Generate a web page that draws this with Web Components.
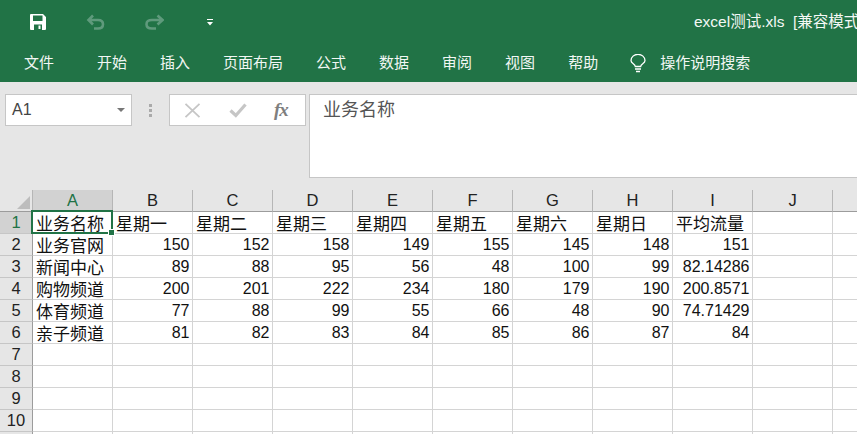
<!DOCTYPE html>
<html lang="zh">
<head>
<meta charset="utf-8">
<title>excel测试.xls</title>
<style>
html,body{margin:0;padding:0;width:857px;height:434px;overflow:hidden;background:#fff;font-family:"Liberation Sans","Noto Sans CJK SC",sans-serif}
x-app{display:flex;flex-direction:column;width:857px;height:434px;overflow:hidden}
</style>
</head>
<body>
<x-app>
<x-titlebar title-text="excel测试.xls  [兼容模式]"></x-titlebar>
<x-tabs></x-tabs>
<x-formula-bar name="A1" value="业务名称"></x-formula-bar>
<x-sheet></x-sheet>
</x-app>
<script>
const CJK='"Liberation Sans","Noto Sans CJK SC",sans-serif';
class XTitlebar extends HTMLElement{
  connectedCallback(){
    const s=this.attachShadow({mode:'open'});
    s.innerHTML=`<style>
    :host{display:flex;align-items:center;height:44px;flex:none;background:#217346;color:#fff;overflow:hidden;font-family:${CJK};box-sizing:border-box;padding-left:30px}
    svg{display:block;flex:none}
    .undo{margin-left:40px}.redo{margin-left:40px}.more{margin-left:43px}
    .title{margin-left:481px;font-size:15.5px;white-space:pre;flex:none;color:#f4f8f5;padding-bottom:4px}
    </style>
    <svg width="16" height="16" viewBox="0 0 16 16"><path fill="#fff" fill-rule="evenodd" d="M1 0H13L16 3V15Q16 16 15 16H1Q0 16 0 15V1Q0 0 1 0ZM3 1.5V7H12.5V1.5ZM4 10.5V16H12V10.5ZM8.5 11.5H10.5V15H8.5Z"/></svg>
    <svg class="undo" width="19" height="16" viewBox="0 0 19 16"><path fill="none" stroke="#5f9a7c" stroke-width="2.6" d="M7 1.5 2.5 6 7 10.5M3 6H12Q17 6 17 10.2T12 14.5H8"/></svg>
    <svg class="redo" width="19" height="16" viewBox="0 0 19 16"><path fill="none" stroke="#5f9a7c" stroke-width="2.6" d="M12.5 1.5 17.5 6 12.5 10.5M17 6H7Q1.5 6 1.5 10.2T7 14.5H11"/></svg>
    <svg class="more" width="6" height="7" viewBox="0 0 6 7"><path fill="#fff" d="M0 0H6V1H0ZM0 3H6L3 6.5Z"/></svg>
    <div class="title">${this.getAttribute('title-text')}</div>`;
  }
}
class XTabs extends HTMLElement{
  connectedCallback(){
    const s=this.attachShadow({mode:'open'});
    const tabs=['文件','开始','插入','页面布局','公式','数据','审阅','视图','帮助'];
    s.innerHTML=`<style>
    :host{display:flex;align-items:center;height:38px;flex:none;background:#217346;color:#f2f7f4;font-size:15px;padding:0 0 4px 24px;box-sizing:border-box;font-family:${CJK};gap:33px;white-space:nowrap;overflow:hidden}
    .file{margin-right:10px}
    .tell{display:flex;align-items:center;gap:14px;font-size:15px;margin-left:-1px}
    svg{display:block;margin:2.5px 0 -2.5px}
    </style>
    ${tabs.map((t,i)=>`<span class="${i==0?'file':''}">${t}</span>`).join('')}
    <div class="tell"><svg width="16" height="19" viewBox="0 0 16 19"><path fill="none" stroke="#fff" stroke-width="1.3" d="M5.3 12.5C5 10 1 9.5 1 6.5A6.8 6 0 0 1 15 6.5C15 9.5 11 10 10.7 12.5Z"/><path fill="none" stroke="#fff" stroke-width="1.4" d="M5 15H11M6 17.5H10"/></svg><span>操作说明搜索</span></div>`;
  }
}
class XFormulaBar extends HTMLElement{
  connectedCallback(){
    const s=this.attachShadow({mode:'open'});
    s.innerHTML=`<style>
    :host{display:flex;align-items:flex-start;height:108px;flex:none;background:#e6e6e6;box-sizing:border-box;padding:12px 0 0 5px;font-family:${CJK}}
    .box{background:#fff;border:1px solid #c6c6c6;box-sizing:border-box;height:32px;display:flex;align-items:center}
    .name{width:127px;padding:0 6px;font-size:16px;color:#444;justify-content:space-between}
    .tri{width:0;height:0;border:4px solid transparent;border-top:4px solid #777;margin-top:4px}
    .dots{width:37px;display:flex;flex-direction:column;align-items:center;gap:2px;height:32px;justify-content:center}
    .dots i{display:block;width:3px;height:3px;background:#aaa}
    .btns{width:137px;padding:0;justify-content:flex-start}
    .btns svg{display:block;flex:none}
    .fx{font:italic bold 19px "Liberation Serif",serif;color:#7f7f7f;margin-left:27px;letter-spacing:-1px}
    .val{flex:1;margin-left:3px;height:84px;background:#fff;border:1px solid #c6c6c6;border-right:none;box-sizing:border-box;padding:4px 0 0 13px;font-size:18px;color:#555;line-height:22px}
    </style>
    <div class="box name"><span>${this.getAttribute('name')}</span><span class="tri"></span></div>
    <div class="dots"><i></i><i></i><i></i></div>
    <div class="box btns">
      <svg style="margin-left:14px" width="17" height="15" viewBox="0 0 17 15"><path fill="none" stroke="#c6c6c6" stroke-width="1.8" d="M1.5 .8 15.5 14.2M15.5 .8 1.5 14.2"/></svg>
      <svg style="margin-left:28px" width="18" height="15" viewBox="0 0 18 15"><path fill="none" stroke="#c6c6c6" stroke-width="3.2" d="M1.5 7.5 6.8 12.5 16.5 1.5"/></svg>
      <span class="fx">fx</span>
    </div>
    <div class="val">${this.getAttribute('value')}</div>`;
  }
}
class XCell extends HTMLElement{
  connectedCallback(){
    const s=this.attachShadow({mode:'open'});
    s.innerHTML=`<style>
    :host{display:flex;align-items:center;box-sizing:border-box;height:22px;border-right:1px solid #d4d4d4;border-bottom:1px solid #d4d4d4;font-size:16px;color:#111;overflow:visible;white-space:nowrap;font-family:${CJK}}
    :host([t]){padding-left:3px;font-size:17px;justify-content:flex-start}
    :host([n]){padding-right:2.5px;justify-content:flex-end}
    </style><slot></slot>`;
  }
}
class XHead extends HTMLElement{
  connectedCallback(){
    const s=this.attachShadow({mode:'open'});
    s.innerHTML=`<style>
    :host{display:flex;align-items:center;justify-content:center;box-sizing:border-box;background:#e6e6e6;font-size:16.5px;color:#222;font-family:${CJK}}
    :host([c]){height:22px;border-right:1px solid #b6b6b6;border-bottom:1px solid #9c9c9c}
    :host([r]){height:22px;border-right:1px solid #9c9c9c;border-bottom:1px solid #c6c6c6}
    :host([on]){background:#d2d2d2;color:#217346}
    </style><slot></slot>`;
  }
}
class XSheet extends HTMLElement{
  connectedCallback(){
    const s=this.attachShadow({mode:'open'});
    const cols='ABCDEFGHIJ'.split('');
    const data=[
     ['业务名称','星期一','星期二','星期三','星期四','星期五','星期六','星期日','平均流量'],
     ['业务官网',150,152,158,149,155,145,148,151],
     ['新闻中心',89,88,95,56,48,100,99,'82.14286'],
     ['购物频道',200,201,222,234,180,179,190,'200.8571'],
     ['体育频道',77,88,99,55,66,48,90,'74.71429'],
     ['亲子频道',81,82,83,84,85,86,87,84]];
    let h=`<x-head c><svg width="13" height="13" viewBox="0 0 13 13" style="margin:4px 0 0 14px"><path fill="#bdbdbd" d="M13 0V13H0Z"/></svg></x-head>`;
    cols.forEach((c,i)=>h+=`<x-head c ${i==0?'on':''}>${c}</x-head>`);
    h+=`<x-head c style="border-right:none"></x-head>`;
    for(let r=0;r<11;r++){
      h+=`<x-head r ${r==0?'on':''}>${r<10?r+1:''}</x-head>`;
      for(let c=0;c<11;c++){
        const v=data[r]&&data[r][c];
        if(v===undefined||v===null) h+=`<x-cell></x-cell>`;
        else if(typeof v==='string'&&/[^\d.]/.test(v)) h+=`<x-cell t>${v}</x-cell>`;
        else h+=`<x-cell n>${v}</x-cell>`;
      }
    }
    s.innerHTML=`<style>
    :host{display:block;flex:1;position:relative;overflow:hidden;background:#fff}
    .g{display:grid;grid-template-columns:33px 80px repeat(8,80px) 80px 40px;grid-auto-rows:min-content}
    .sel{position:absolute;left:31px;top:20px;width:82px;height:24px;box-sizing:border-box;border:2px solid #217346}
    .sel i{position:absolute;right:-4px;bottom:-4px;width:5px;height:5px;background:#217346;border:1px solid #fff}
    </style><div class="g">${h}</div><div class="sel"><i></i></div>`;
  }
}
customElements.define('x-titlebar',XTitlebar);
customElements.define('x-tabs',XTabs);
customElements.define('x-formula-bar',XFormulaBar);
customElements.define('x-cell',XCell);
customElements.define('x-head',XHead);
customElements.define('x-sheet',XSheet);
</script>
</body>
</html>
